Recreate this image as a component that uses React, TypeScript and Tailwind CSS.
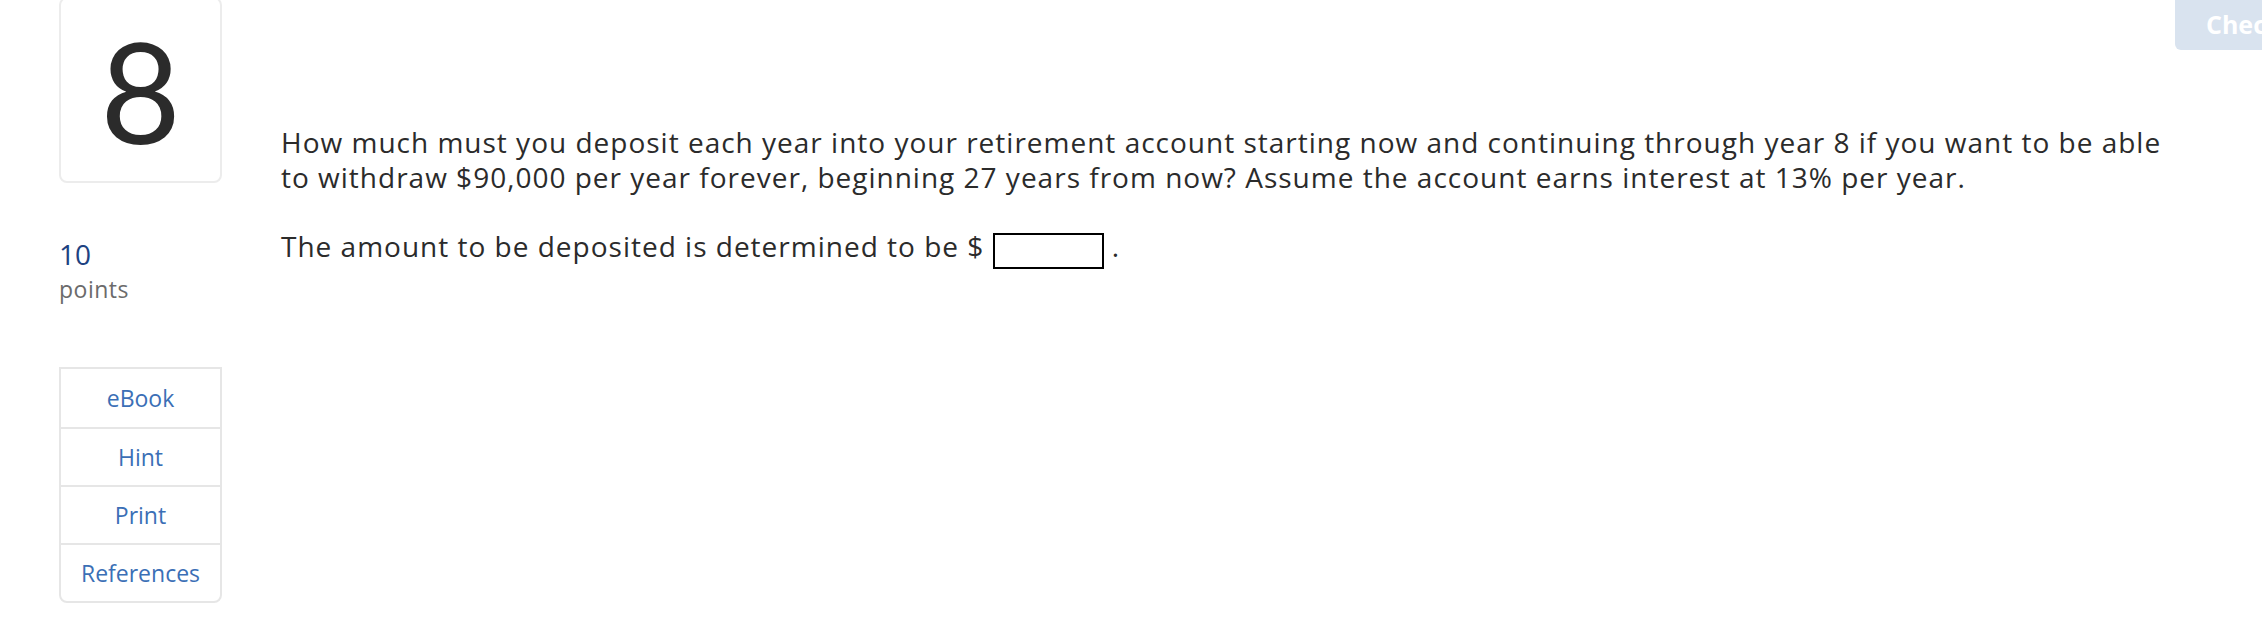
const links = ["eBook", "Hint", "Print", "References"];

export default function App() {
  return (
    <div className="relative h-[636px] w-full overflow-hidden bg-white font-['Open_Sans',sans-serif] text-[#2b2b2b]">
      <button className="absolute right-[-145px] top-0 h-[50px] w-[232px] rounded-bl-[6px] bg-[#d9e3ef] pl-[31px] text-left text-[25px] font-bold text-white">
        Check my work
      </button>

      <div className="flex gap-[59px] pl-[59px]">
        <div className="flex w-[163px] flex-col">
          <div className="-mt-[3px] flex h-[186px] items-center justify-center rounded-[8px] border-2 border-[#ececec]">
            <span className="font-['Lato',sans-serif] text-[139px] font-normal leading-none text-[#2b2b2b]">8</span>
          </div>

          <div className="mt-[54px] text-[28px] leading-[35px] text-[#1d4281]">10</div>
          <div className="text-[23px] leading-[35px] tracking-[0.5px] text-[#6b6b6b]">points</div>

          <div className="mt-[60px] flex flex-col rounded-b-[8px] border-2 border-[#e6e6e6]">
            {links.map((l, i) => (
              <a
                key={l}
                className={
                  "flex h-[58px] items-center justify-center text-[23px] text-[#3b6fb6]" +
                  (i > 0 ? " border-t-2 border-[#e6e6e6]" : "")
                }
              >
                {l}
              </a>
            ))}
          </div>
        </div>

        <div className="w-[1905px] pt-[125px] text-[28px] leading-[35px] tracking-[1px]">
          <p>
            How much must you deposit each year into your retirement account starting now and continuing through year 8 if
            you want to be able to withdraw $90,000 per year forever, beginning 27 years from now? Assume the account earns
            interest at 13% per year.
          </p>
          <p className="mt-[34px]">
            The amount to be deposited is determined to be ${" "}
            <span className="inline-block h-[36px] w-[111px] border-2 border-black align-[-12px]"></span> .
          </p>
        </div>
      </div>
    </div>
  );
}
